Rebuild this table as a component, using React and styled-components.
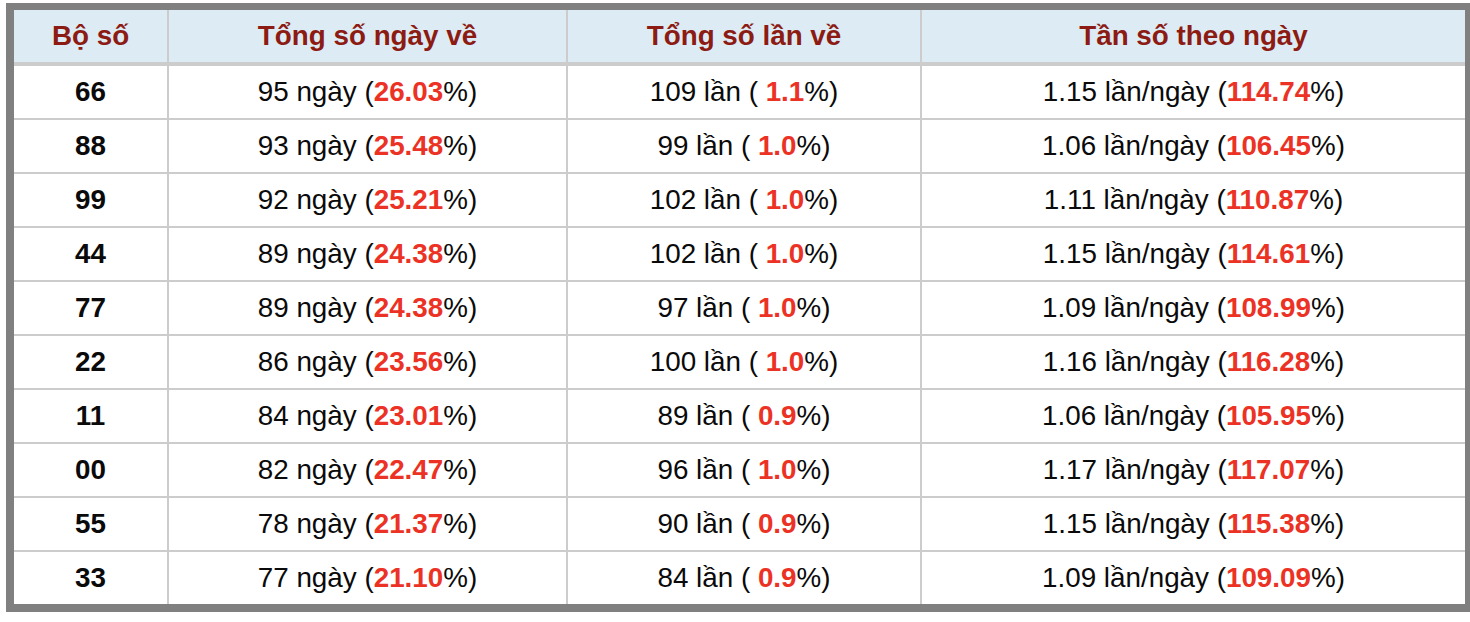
import React from 'react';
import styled, { createGlobalStyle } from 'styled-components';

const GlobalStyle = createGlobalStyle`
  html, body {
    margin: 0;
    padding: 0;
    background: #ffffff;
    overflow: hidden;
  }
  body {
    font-family: "Liberation Sans", Arial, Helvetica, sans-serif;
  }
`;

const Frame = styled.div`
  margin: 3px 0 0 6px;
  width: 1451px;
  border-style: solid;
  border-color: #808080;
  border-width: 7px 5px 8px 8px;
  background: #ffffff;
`;

const Table = styled.table`
  width: 1451px;
  table-layout: fixed;
  border-collapse: separate;
  border-spacing: 0;
  font-size: 27.8px;
  color: #0a0a0a;
`;

const HeadCell = styled.th`
  height: 52px;
  padding: 0;
  background: #ddebf4;
  color: #8c1b13;
  font-weight: bold;
  text-align: center;
  vertical-align: middle;
  border-bottom: 4px solid #cccccc;
  border-right: 2px solid #cccccc;

  &:last-child {
    border-right: none;
  }
`;

const Cell = styled.td`
  height: 52px;
  padding: 0;
  text-align: center;
  vertical-align: middle;
  white-space: nowrap;
  font-weight: ${(p) => (p.$bold ? 'bold' : 'normal')};
  border-right: 2px solid #cccccc;
  border-bottom: ${(p) => (p.$last ? 'none' : '2px solid #cccccc')};

  &:last-child {
    border-right: none;
  }
`;

const Red = styled.b`
  color: #ec3224;
  font-weight: bold;
`;

const rows = [
  ['66', '95', '26.03', '109', '1.1', '1.15', '114.74'],
  ['88', '93', '25.48', '99', '1.0', '1.06', '106.45'],
  ['99', '92', '25.21', '102', '1.0', '1.11', '110.87'],
  ['44', '89', '24.38', '102', '1.0', '1.15', '114.61'],
  ['77', '89', '24.38', '97', '1.0', '1.09', '108.99'],
  ['22', '86', '23.56', '100', '1.0', '1.16', '116.28'],
  ['11', '84', '23.01', '89', '0.9', '1.06', '105.95'],
  ['00', '82', '22.47', '96', '1.0', '1.17', '117.07'],
  ['55', '78', '21.37', '90', '0.9', '1.15', '115.38'],
  ['33', '77', '21.10', '84', '0.9', '1.09', '109.09'],
];

const App = () => (
  <>
    <GlobalStyle />
    <Frame>
      <Table>
        <colgroup>
          <col style={{ width: 155 }} />
          <col style={{ width: 399 }} />
          <col style={{ width: 354 }} />
          <col style={{ width: 543 }} />
        </colgroup>
        <thead>
          <tr>
            <HeadCell>Bộ số</HeadCell>
            <HeadCell>Tổng số ngày về</HeadCell>
            <HeadCell>Tổng số lần về</HeadCell>
            <HeadCell>Tần số theo ngày</HeadCell>
          </tr>
        </thead>
        <tbody>
          {rows.map(([num, days, dayPct, times, timePct, freq, freqPct], i) => {
            const last = i === rows.length - 1;
            return (
              <tr key={num}>
                <Cell $bold $last={last}>{num}</Cell>
                <Cell $last={last}>
                  {days} ngày (<Red>{dayPct}</Red>%)
                </Cell>
                <Cell $last={last}>
                  {times} lần ( <Red>{timePct}</Red>%)
                </Cell>
                <Cell $last={last}>
                  {freq} lần/ngày (<Red>{freqPct}</Red>%)
                </Cell>
              </tr>
            );
          })}
        </tbody>
      </Table>
    </Frame>
  </>
);

export default App;
